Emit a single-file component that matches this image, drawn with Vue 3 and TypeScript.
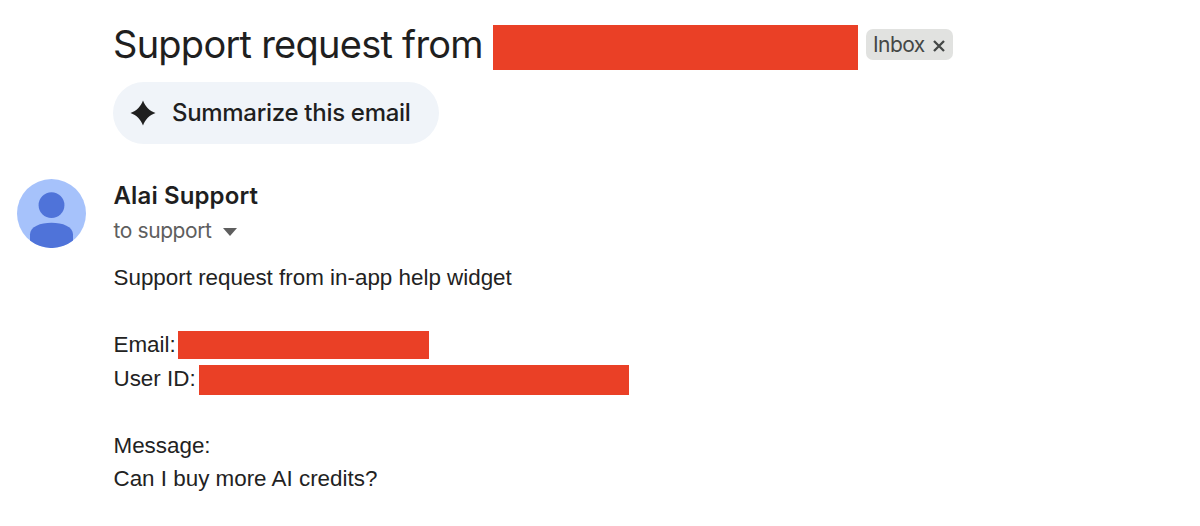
<script setup lang="ts">
interface Line {
  text: string
  redaction?: string
}

const lines: Line[] = [
  { text: 'Support request from in-app help widget' },
  { text: '' },
  { text: 'Email:', redaction: 'email' },
  { text: 'User ID:', redaction: 'user' },
  { text: '' },
  { text: 'Message:' },
  { text: 'Can I buy more AI credits?' },
]
</script>

<template>
  <main class="mail">
    <header class="subject">
      <h1 class="title">Support request from</h1>
      <span class="redacted subject-redacted"></span>
      <span class="label">
        <span class="label-text">Inbox</span>
        <svg class="close" viewBox="0 0 12 12"><path d="M1 1 11 11M11 1 1 11" /></svg>
      </span>
    </header>

    <button class="summarize" type="button">
      <svg class="spark" viewBox="0 0 26 26">
        <path d="M13 .5C15.4 6.8 19.2 10.6 25.5 13 19.2 15.4 15.4 19.2 13 25.5 10.6 19.2 6.8 15.4.5 13 6.8 10.6 10.6 6.8 13 .5Z" />
      </svg>
      <span class="summarize-text">Summarize this email</span>
    </button>

    <section class="sender">
      <svg class="avatar" viewBox="0 0 69 69">
        <circle cx="34.5" cy="34.5" r="34.5" fill="#a6c2fb" />
        <circle cx="34.5" cy="26.2" r="12.9" fill="#4f73d9" />
        <path d="M13 61.5V55.5C13 47.5 23.5 43.7 34.5 43.7S56 47.5 56 55.5V61.5A34.5 34.5 0 0 1 13 61.5Z" fill="#4f73d9" />
      </svg>
      <div class="identity">
        <div class="name"><span class="name-text">Alai Support</span></div>
        <div class="recipient">
          <span class="recipient-text">to support</span>
          <svg class="caret" viewBox="0 0 14 8"><path d="M0 0H14L7 8Z" /></svg>
        </div>
      </div>
    </section>

    <section class="body">
      <div v-for="(line, i) in lines" :key="i" class="line">
        <span>{{ line.text }}</span>
        <span v-if="line.redaction" class="redacted" :class="line.redaction"></span>
      </div>
    </section>
  </main>
</template>

<style>
body {
  background: #fff;
}
</style>

<style scoped>
.mail {
  box-sizing: border-box;
  width: 1200px;
  height: 526px;
  padding: 25px 0 0 113px;
  overflow: hidden;
  background: #fff;
  color: #1f1f1f;
  font-family: Inter, "Open Sans", sans-serif;
}

.redacted {
  flex: none;
  background: #ea4026;
}

.subject {
  display: flex;
  height: 45px;
}

.title {
  flex: none;
  width: 380px;
  margin: 0;
  font-size: 38px;
  font-weight: 400;
  line-height: 39px;
  letter-spacing: -0.75px;
  white-space: nowrap;
}

.subject-redacted {
  width: 365px;
  height: 45px;
}

.label {
  box-sizing: border-box;
  display: flex;
  align-items: center;
  justify-content: space-between;
  width: 87px;
  height: 31px;
  margin: 4px 0 0 8px;
  padding: 0 8px 0 7px;
  border-radius: 7px;
  background: #e1e2e0;
  color: #444746;
  font-size: 21px;
  letter-spacing: -0.55px;
  line-height: 31px;
}

.close {
  width: 12px;
  height: 12px;
  margin-top: 3px;
  fill: none;
  stroke: #444746;
  stroke-width: 2.3;
}

.summarize {
  display: flex;
  align-items: center;
  box-sizing: border-box;
  width: 326px;
  height: 62px;
  margin: 12px 0 0;
  padding: 0 0 0 17px;
  border: 0;
  border-radius: 31px;
  background: #f0f4f9;
  color: #1f1f1f;
  font: 500 24px/60px Inter, "Open Sans", sans-serif;
  letter-spacing: -0.3px;
  white-space: nowrap;
}

.spark {
  flex: none;
  width: 26px;
  height: 26px;
  margin-right: 16px;
  fill: #1f1f1f;
}

.sender {
  display: flex;
  height: 69px;
  margin: 35px 0 0 -96px;
}

.avatar {
  width: 69px;
  height: 69px;
  margin-right: 27px;
}

.name {
  height: 34px;
  padding-left: 0.5px;
  font-size: 24px;
  font-weight: 600;
  line-height: 33px;
  letter-spacing: 0.12px;
}

.recipient {
  display: flex;
  align-items: center;
  height: 35px;
  padding-left: 0.5px;
  color: #5e5e5e;
  font-size: 21px;
  letter-spacing: -0.4px;
  line-height: 35px;
}

.caret {
  width: 14px;
  height: 8px;
  margin: 2px 0 0 11px;
  fill: #5e5e5e;
}

.body {
  margin-top: 13px;
  padding-left: 0.5px;
  color: #222;
  font: 22.4px/33.5px "Liberation Sans", Arial, sans-serif;
}

.line {
  display: flex;
  height: 33.5px;
  white-space: nowrap;
}

.email {
  width: 251px;
  height: 28px;
  margin: 3px 0 0 2.5px;
}

.user {
  width: 430px;
  height: 30px;
  margin: 3px 0 0 3px;
}
</style>
